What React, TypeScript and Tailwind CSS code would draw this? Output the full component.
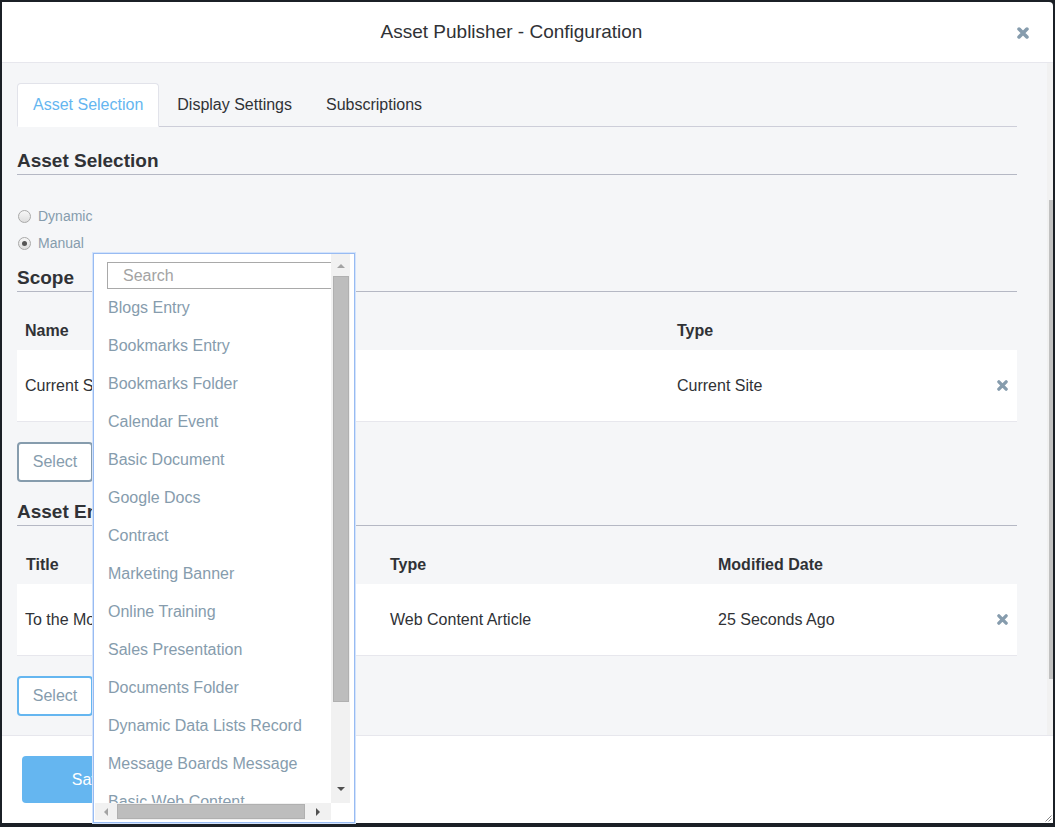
import React from 'react';

const assetTypes = [
    'Blogs Entry',
    'Bookmarks Entry',
    'Bookmarks Folder',
    'Calendar Event',
    'Basic Document',
    'Google Docs',
    'Contract',
    'Marketing Banner',
    'Online Training',
    'Sales Presentation',
    'Documents Folder',
    'Dynamic Data Lists Record',
    'Message Boards Message',
    'Basic Web Content',
];

const Times: React.FC<{ size?: number }> = ({ size = 11 }) => (
    <svg width={size} height={size} viewBox="0 0 10 10">
        <path d="M1.7 1.7 L8.3 8.3 M8.3 1.7 L1.7 8.3" stroke="#869cad" strokeWidth="3" strokeLinecap="round" />
    </svg>
);

const Radio: React.FC<{ label: string; checked?: boolean }> = ({ label, checked }) => (
    <div className="flex items-center h-[20px] gap-[7px] pl-[1px]">
        <span className="w-[13px] h-[13px] rounded-full border border-[#a9a9a9] bg-gradient-to-b from-[#f7f7f7] to-[#dedede] flex items-center justify-center">
            {checked && <span className="w-[5px] h-[5px] rounded-full bg-[#555]" />}
        </span>
        <span className="text-[14px] leading-[20px] text-[#869cad]">{label}</span>
    </div>
);

const Heading: React.FC<{ children: React.ReactNode; className?: string }> = ({ children, className }) => (
    <h3 className={`text-[19px] leading-[24px] font-bold text-[#303236] pt-[1px] pb-[1px] border-b border-[#b5b8c4] ${className ?? ''}`}>
        {children}
    </h3>
);

const SelectButton: React.FC<{ focused?: boolean }> = ({ focused }) => (
    <button
        className={`mt-[20px] w-[76px] h-[40px] rounded-[4px] border-2 bg-white text-[16px] text-[#869cad] ${
            focused ? 'border-[#65b6f0]' : 'border-[#869cad]'
        }`}
    >
        Select
    </button>
);

const Triangle: React.FC<{ dir: 'up' | 'down' | 'left' | 'right'; color: string }> = ({ dir, color }) => {
    const d = {
        up: 'M0 4 L4 0 L8 4 Z',
        down: 'M0 0 L8 0 L4 4 Z',
        left: 'M4 0 L4 8 L0 4 Z',
        right: 'M0 0 L4 4 L0 8 Z',
    }[dir];
    const vertical = dir === 'up' || dir === 'down';
    return (
        <svg width={vertical ? 8 : 4} height={vertical ? 4 : 8} viewBox={vertical ? '0 0 8 4' : '0 0 4 8'}>
            <path d={d} fill={color} />
        </svg>
    );
};

const TypeDropdown: React.FC = () => (
    <div className="absolute left-[93px] top-[253px] w-[262px] h-[570px] bg-white border border-[#98bbf2] shadow-[0_0_0_1px_#d3e3fb] pl-[1px] pr-[4px] pb-[2px] flex flex-col">
        <div className="flex flex-1 min-h-0">
            <div className="flex-1 overflow-hidden pt-[8px] pl-[12px]">
                <div className="w-[240px] h-[27px] border border-[#a9a9a9] pl-[15px] flex items-center text-[16px] text-[#a3a3a3]">
                    Search
                </div>
                <ul>
                    {assetTypes.map(t => (
                        <li key={t} className="h-[38px] flex items-center pl-[1px] text-[16px] text-[#869cad] whitespace-nowrap">
                            {t}
                        </li>
                    ))}
                </ul>
            </div>
            <div className="w-[19px] bg-[#f1f1f1] flex flex-col">
                <div className="h-[22px] flex items-center justify-center pt-[2px]">
                    <Triangle dir="up" color="#a3a3a3" />
                </div>
                <div className="h-[426px] ml-[2px] mr-[1px] bg-[#bdbdbd] border border-[#b0b0b0]" />
                <div className="flex-1" />
                <div className="h-[24px] flex items-center justify-center pb-[4px]">
                    <Triangle dir="down" color="#505050" />
                </div>
            </div>
        </div>
        <div className="h-[17px] flex">
            <div className="flex-1 bg-[#f1f1f1] flex items-center">
                <div className="w-[22px] flex justify-center">
                    <Triangle dir="left" color="#a3a3a3" />
                </div>
                <div className="w-[188px] h-[15px] bg-[#bdbdbd] border border-[#b0b0b0]" />
                <div className="flex-1 flex justify-center">
                    <Triangle dir="right" color="#505050" />
                </div>
            </div>
            <div className="w-[19px] bg-white" />
        </div>
    </div>
);

export default function App() {
    return (
        <div className="relative w-[1055px] h-[827px] overflow-hidden bg-[#1b2026] pt-[2px] pl-[2px] font-['Liberation_Sans',Arial,sans-serif] text-[#303236]">
            <div className="relative w-[1051px] h-[821px] bg-white rounded-tr-[4px] flex flex-col">
                {/* header */}
                <div className="h-[61px] border-b border-[#e7e7ed] flex items-center pl-[15px] pr-[15px]">
                    <div className="flex-1 text-center text-[19px] text-[#303236]">Asset Publisher - Configuration</div>
                    <div className="w-[32px] flex justify-end pr-[9px] pt-[1px]">
                        <Times size={12} />
                    </div>
                </div>

                {/* body */}
                <div className="h-[672px] bg-[#f5f6f8] flex">
                    <div className="flex-1 pl-[15px] pt-[20px] overflow-hidden">
                        <div className="w-[1000px] flex flex-col">
                            <div className="h-[44px] flex border-b border-[#cdced9]">
                                <div className="h-[44px] px-[15px] flex items-center bg-white border border-[#e2e3ea] border-b-white rounded-t-[4px] text-[16px] text-[#65b6f0]">
                                    Asset Selection
                                </div>
                                <div className="h-[44px] ml-[2px] px-[16px] flex items-center text-[16px] text-[#303236]">Display Settings</div>
                                <div className="h-[44px] ml-[2px] px-[16px] flex items-center text-[16px] text-[#303236]">Subscriptions</div>
                            </div>

                            <Heading className="mt-[21px]">Asset Selection</Heading>

                            <div className="mt-[31px] flex flex-col gap-[7px]">
                                <Radio label="Dynamic" />
                                <Radio label="Manual" checked />
                            </div>

                            <Heading className="mt-[12px]">Scope</Heading>

                            <div className="grid grid-cols-[652px_1fr_30px] h-[58px] pt-[29px] text-[16px] leading-[20px] font-bold">
                                <div className="px-[8px]">Name</div>
                                <div className="px-[8px]">Type</div>
                                <div />
                            </div>
                            <div className="grid grid-cols-[652px_1fr_30px] h-[72px] items-center bg-white border-b border-[#e7e7ed] text-[16px]">
                                <div className="px-[8px]">Current Site</div>
                                <div className="px-[8px]">Current Site</div>
                                <div className="flex justify-center"><Times /></div>
                            </div>
                            <div>
                                <SelectButton />
                            </div>

                            <Heading className="mt-[17px]">Asset Entries</Heading>

                            <div className="grid grid-cols-[365px_328px_1fr_30px] h-[58px] pt-[29px] text-[16px] leading-[20px] font-bold">
                                <div className="pl-[9px]">Title</div>
                                <div className="px-[8px]">Type</div>
                                <div className="px-[8px]">Modified Date</div>
                                <div />
                            </div>
                            <div className="grid grid-cols-[365px_328px_1fr_30px] h-[72px] items-center bg-white border-b border-[#e7e7ed] text-[16px]">
                                <div className="px-[8px]">To the Moon</div>
                                <div className="px-[8px]">Web Content Article</div>
                                <div className="px-[8px]">25 Seconds Ago</div>
                                <div className="flex justify-center"><Times /></div>
                            </div>
                            <div>
                                <SelectButton focused />
                            </div>
                        </div>
                    </div>
                    <div className="w-[6px] bg-[#f1f1f1] flex flex-col pl-[2px]">
                        <div className="h-[137px]" />
                        <div className="h-[479px] bg-[#c1c1c1]" />
                    </div>
                </div>

                {/* footer */}
                <div className="relative h-[88px] border-t border-[#e7e7ed] pt-[20px] pl-[20px]">
                    <button className="w-[136px] h-[47px] rounded-[4px] bg-[#65b6f0] text-white text-[16px]">Save</button>
                    <svg className="absolute right-[1px] bottom-[1px]" width="7" height="7" viewBox="0 0 7 7">
                        <path d="M6.5 0.5 L0.5 6.5 M6.5 3.5 L3.5 6.5" stroke="#888" strokeWidth="1" />
                    </svg>
                </div>
            </div>

            <TypeDropdown />
        </div>
    );
}
